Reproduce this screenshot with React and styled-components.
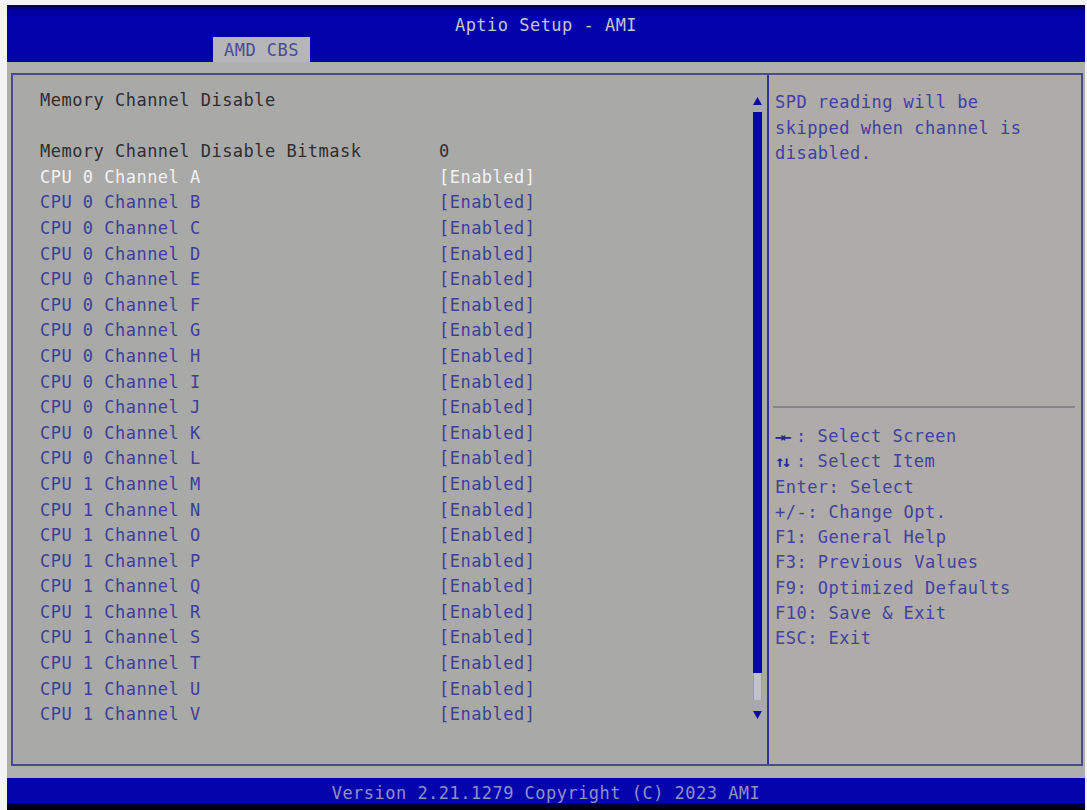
import React from "react";
import styled, { createGlobalStyle } from "styled-components";

const Global = createGlobalStyle`
  html, body { margin: 0; padding: 0; background: #f6f6f6; }
  body { font-family: "DejaVu Sans Mono", "Liberation Mono", monospace; }
  * { box-sizing: border-box; }
`;

const Screen = styled.div`
  width: 1087px;
  height: 810px;
  display: flex;
  flex-direction: column;
  padding: 5px 2px 0 7px;
  background: #f4f4f4;
  font-family: "DejaVu Sans Mono", "Liberation Mono", monospace;
  font-size: 17px;
  letter-spacing: 0.48px;
  overflow: hidden;
`;

const Header = styled.div`
  height: 57px;
  display: flex;
  flex-direction: column;
  background: linear-gradient(to bottom, #05052a 0px, #0000a0 5px, #0202ac 12px, #0303aa 100%);
`;

const Title = styled.div`
  padding-top: 10px;
  line-height: 20px;
  text-align: center;
  color: #c4c4d8;
`;

const TabRow = styled.div`
  margin-top: auto;
  display: flex;
  padding-left: 206px;
`;

const Tab = styled.div`
  width: 97px;
  height: 25px;
  line-height: 27px;
  text-align: center;
  background: #b6b6b8;
  color: #4b4b96;
`;

const Body = styled.div`
  height: 716px;
  display: flex;
  background: #aeaeae;
  padding: 11px 2px 12px 4px;
`;

const Frame = styled.div`
  flex: 1;
  display: flex;
  border: 2px solid #4a4a8e;
  min-height: 0;
`;

const LeftPane = styled.div`
  width: 754px;
  display: flex;
  background: #a9a9a8;
`;

const Divider = styled.div`
  width: 2px;
  background: #34348e;
`;

const RightPane = styled.div`
  flex: 1;
  display: flex;
  flex-direction: column;
  background: #aeaba9;
`;

const List = styled.div`
  flex: 1;
  padding: 13px 0 0 27px;
`;

const Row = styled.div`
  display: grid;
  grid-template-columns: 399px auto;
  height: 25.6px;
  line-height: 25.6px;
  white-space: pre;
  color: ${(p) =>
    p.$kind === "selected" ? "#f3f3f3" : p.$kind === "static" ? "#2e2e32" : "#3e3e98"};
`;

const ScrollCol = styled.div`
  width: 10px;
  margin-right: 5px;
  padding-top: 22px;
  display: flex;
  flex-direction: column;
  align-items: center;
`;

const Arrow = styled.svg`
  display: block;
  width: 9px;
  height: 9px;
`;

const Thumb = styled.div`
  width: 9px;
  height: 561px;
  margin-top: 6px;
  background: #0707b0;
`;

const Track = styled.div`
  width: 9px;
  height: 27px;
  background: #c2c2cc;
  border-left: 1px solid #9a9ab8;
  border-right: 1px solid #9a9ab8;
  margin-bottom: 10px;
`;

const HelpText = styled.div`
  height: 331px;
  padding: 15px 6px 0 6px;
  line-height: 25.5px;
  color: #4040a0;
`;

const Separator = styled.div`
  height: 2px;
  margin: 0 6px 0 4px;
  background: #84848f;
`;

const Keys = styled.div`
  padding: 16px 6px 0 6px;
  line-height: 25.3px;
  color: #4242a0;
`;

const KeyLine = styled.div`
  white-space: pre;
`;

const Glyph = styled.span`
  display: inline-block;
  width: 21px;
  color: #26269e;
  font-size: 16px;
  letter-spacing: -3px;
  font-weight: bold;
`;

const Footer = styled.div`
  height: 25px;
  padding-top: 4px;
  line-height: 22px;
  text-align: center;
  background: #0404ac;
  color: #8f8fca;
`;

const FooterShade = styled.div`
  height: 7px;
  background: linear-gradient(to bottom, #02024a, #000000);
`;

const channels0 = "ABCDEFGHIJKL".split("");
const channels1 = "MNOPQRSTUV".split("");

const rows = [
  { label: "Memory Channel Disable", value: "", kind: "static" },
  { label: "", value: "", kind: "static" },
  { label: "Memory Channel Disable Bitmask", value: "0", kind: "static" },
  ...channels0.map((c, i) => ({
    label: `CPU 0 Channel ${c}`,
    value: "[Enabled]",
    kind: i === 0 ? "selected" : "item",
  })),
  ...channels1.map((c) => ({ label: `CPU 1 Channel ${c}`, value: "[Enabled]", kind: "item" })),
];

export default function App() {
  return (
    <>
      <Global />
      <Screen>
        <Header>
          <Title>Aptio Setup - AMI</Title>
          <TabRow>
            <Tab>AMD CBS</Tab>
          </TabRow>
        </Header>
        <Body>
          <Frame>
            <LeftPane>
              <List>
                {rows.map((r, i) => (
                  <Row key={i} $kind={r.kind}>
                    <span>{r.label}</span>
                    <span>{r.value}</span>
                  </Row>
                ))}
              </List>
              <ScrollCol>
                <Arrow viewBox="0 0 9 9">
                  <polygon points="4.5,0 9,8 0,8" fill="#1010a0" />
                </Arrow>
                <Thumb />
                <Track />
                <Arrow viewBox="0 0 9 9">
                  <polygon points="0,1 9,1 4.5,9" fill="#1010a0" />
                </Arrow>
              </ScrollCol>
            </LeftPane>
            <Divider />
            <RightPane>
              <HelpText>
                SPD reading will be
                <br />
                skipped when channel is
                <br />
                disabled.
              </HelpText>
              <Separator />
              <Keys>
                <KeyLine>
                  <Glyph>→←</Glyph>: Select Screen
                </KeyLine>
                <KeyLine>
                  <Glyph>↑↓</Glyph>: Select Item
                </KeyLine>
                <KeyLine>Enter: Select</KeyLine>
                <KeyLine>+/-: Change Opt.</KeyLine>
                <KeyLine>F1: General Help</KeyLine>
                <KeyLine>F3: Previous Values</KeyLine>
                <KeyLine>F9: Optimized Defaults</KeyLine>
                <KeyLine>F10: Save &amp; Exit</KeyLine>
                <KeyLine>ESC: Exit</KeyLine>
              </Keys>
            </RightPane>
          </Frame>
        </Body>
        <Footer>Version 2.21.1279 Copyright (C) 2023 AMI</Footer>
        <FooterShade />
      </Screen>
    </>
  );
}
